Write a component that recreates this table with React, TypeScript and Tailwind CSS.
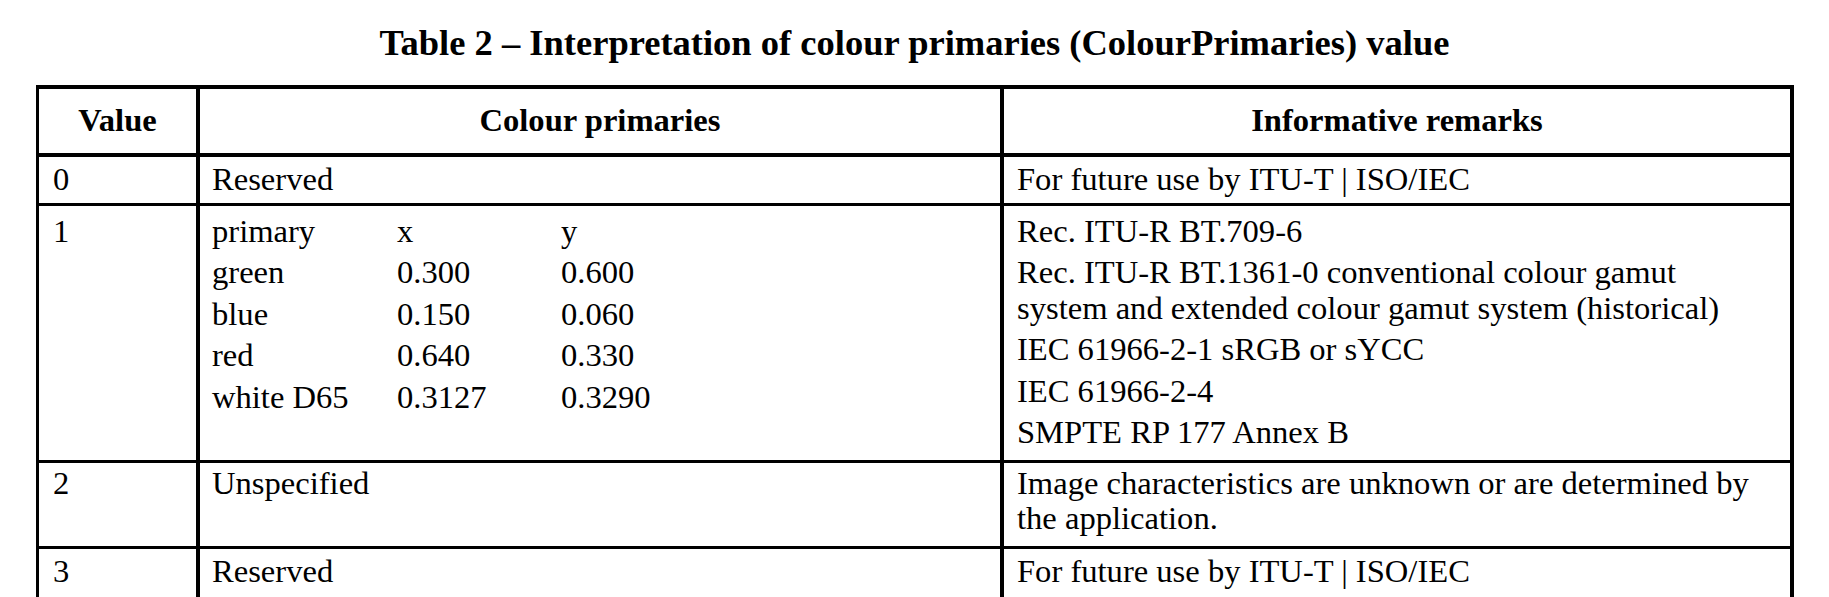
const serif = "font-['Liberation_Serif','Times_New_Roman',serif]"

const primaries = [
  ["primary", "x", "y"],
  ["green", "0.300", "0.600"],
  ["blue", "0.150", "0.060"],
  ["red", "0.640", "0.330"],
  ["white D65", "0.3127", "0.3290"],
]

const remarks = [
  "Rec. ITU-R BT.709-6",
  "Rec. ITU-R BT.1361-0 conventional colour gamut system and extended colour gamut system (historical)",
  "IEC 61966-2-1 sRGB or sYCC",
  "IEC 61966-2-4",
  "SMPTE RP 177 Annex B",
]

function Row({
  value,
  primariesCell,
  remarksCell,
  pad,
  last,
}: {
  value: string
  primariesCell: React.ReactNode
  remarksCell: React.ReactNode
  pad: string
  last?: boolean
}) {
  return (
    <div
      className={`grid grid-cols-[161px_804px_1fr] border-black ${
        last ? "" : "border-b-[3px]"
      }`}
    >
      <div className={`border-r-[4px] border-black pl-[14px] ${pad}`}>{value}</div>
      <div className={`border-r-[4px] border-black pl-[12px] ${pad}`}>{primariesCell}</div>
      <div className={`pl-[13px] pr-[25px] ${pad}`}>{remarksCell}</div>
    </div>
  )
}

export default function App() {
  return (
    <div className={`min-h-screen w-[1829px] h-[597px] overflow-hidden bg-white text-black ${serif}`}>
      {/* Caption */}
      <h1 className="pt-[21px] text-center text-[36.5px] font-bold leading-[44px]">
        Table 2 – Interpretation of colour primaries (ColourPrimaries) value
      </h1>

      {/* Table */}
      <div className="mt-[20px] ml-[36px] w-[1758px] border-t-[4px] border-l-[3px] border-r-[4px] border-black text-[32.6px] leading-[35.5px]">
        {/* Header */}
        <div className="grid grid-cols-[161px_804px_1fr] border-b-[4px] border-black font-bold h-[68px]">
          <div className="flex items-center justify-center border-r-[4px] border-black leading-[37.5px]">Value</div>
          <div className="flex items-center justify-center border-r-[4px] border-black leading-[37.5px]">Colour primaries</div>
          <div className="flex items-center justify-center leading-[37.5px]">Informative remarks</div>
        </div>

        <div className="border-b-[1px] border-transparent -mb-[1px]" />

        <Row
          value="0"
          pad="pt-[5px] pb-[5px]"
          primariesCell="Reserved"
          remarksCell="For future use by ITU-T | ISO/IEC"
        />

        <Row
          value="1"
          pad="pt-[8px] pb-[9px]"
          primariesCell={
            <div className="flex flex-col gap-[6px]">
              {primaries.map((p) => (
                <div key={p[0]} className="grid grid-cols-[185px_164px_auto]">
                  <span>{p[0]}</span>
                  <span>{p[1]}</span>
                  <span>{p[2]}</span>
                </div>
              ))}
            </div>
          }
          remarksCell={
            <div className="flex flex-col gap-[6px]">
              {remarks.map((r) => (
                <p key={r}>{r}</p>
              ))}
            </div>
          }
        />

        <Row
          value="2"
          pad="pt-[3px] pb-[9px]"
          primariesCell="Unspecified"
          remarksCell="Image characteristics are unknown or are determined by the application."
        />

        <Row
          value="3"
          pad="pt-[5px] pb-[20px]"
          primariesCell="Reserved"
          remarksCell="For future use by ITU-T | ISO/IEC"
          last
        />
      </div>
    </div>
  )
}
